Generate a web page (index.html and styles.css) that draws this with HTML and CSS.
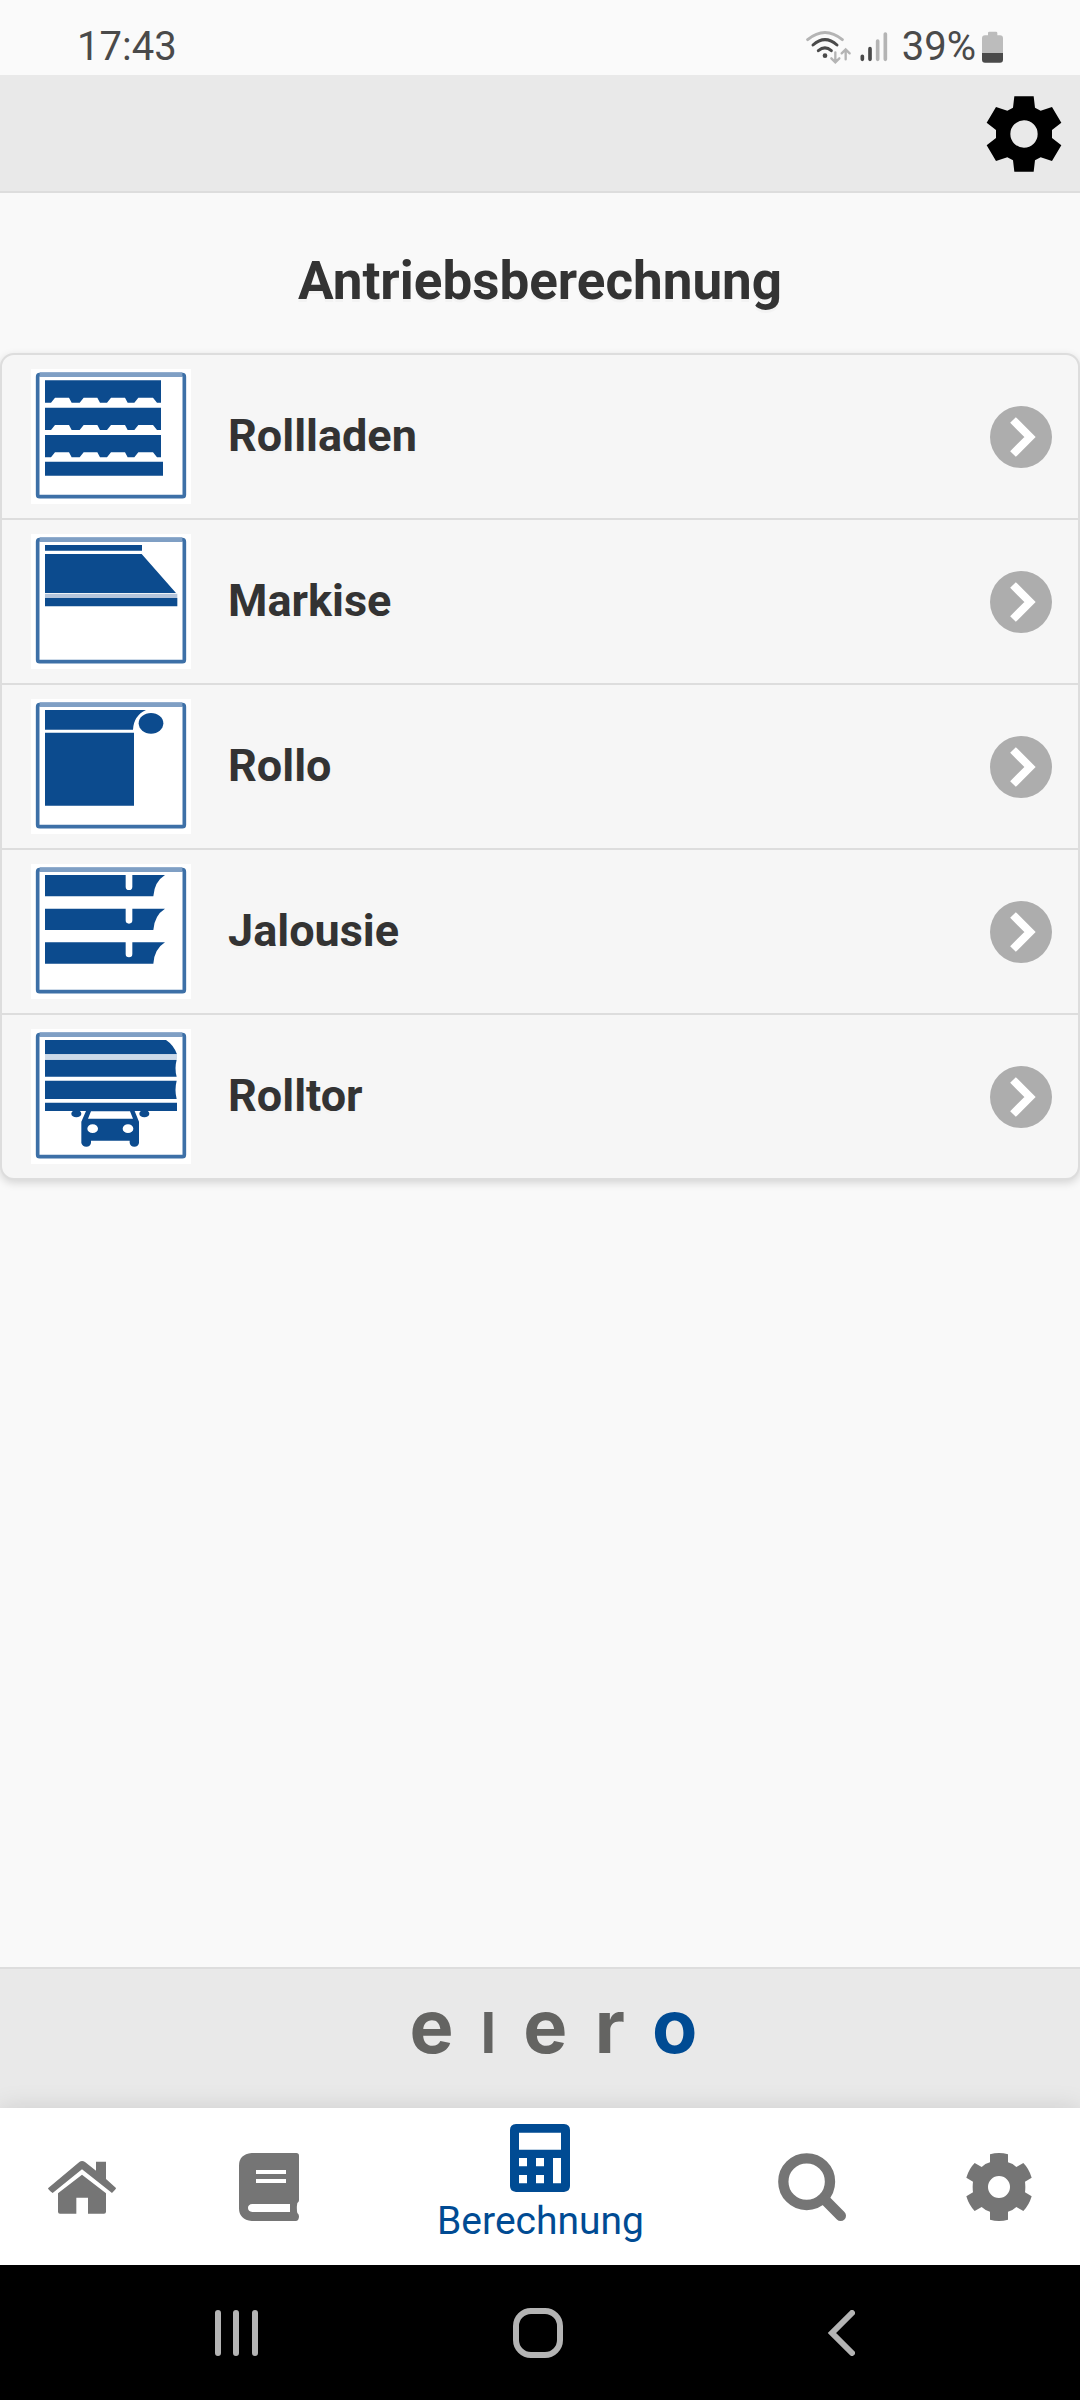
FILE: index.html
```html
<!DOCTYPE html>
<html lang="de">
<head>
<meta charset="utf-8">
<meta name="viewport" content="width=device-width, initial-scale=1">
<title>Antriebsberechnung</title>
<link rel="stylesheet" href="styles.css">
</head>
<body>
<svg class="defs" aria-hidden="true">
  <symbol id="frame" viewBox="0 0 480 405">
    <rect width="480" height="405" fill="#fff"/>
    <rect x="20" y="17" width="440" height="366" rx="6" fill="none" stroke="#3d70a7" stroke-width="11"/>
    <path d="M26 17H454" stroke="#7f9fc4" stroke-width="14"/>
  </symbol>
  <symbol id="chevron" viewBox="0 0 62 62">
    <circle cx="31" cy="31" r="31" fill="#adadad"/>
    <path d="M23 14L40 31L23 48" fill="none" stroke="#fff" stroke-width="8"/>
  </symbol>
</svg>

<div class="status">
  <time class="status-time">17:43</time>
  <div class="status-icons">
    <svg width="46" height="34" viewBox="0 0 138 102" fill="none" stroke-linecap="round" aria-label="WLAN">
      <path d="M5 29Q57-14 109 29" stroke="#b4b4b4" stroke-width="9"/>
      <path d="M21 45Q57 13 93 45M37 62Q57 45 76 62" stroke="#4a4a4a" stroke-width="9"/>
      <circle cx="57" cy="77" r="7" fill="#4a4a4a"/>
      <path d="M88 67V96M76 85L88 97L100 85M119 88V58M107 70L119 58L131 70" stroke="#b4b4b4" stroke-width="7"/>
    </svg>
    <svg class="signal" width="28" height="30" viewBox="0 0 84 90" stroke-width="11" stroke-linecap="round" aria-label="Signal">
      <path d="M7 73V82M30 50V82" stroke="#4a4a4a"/>
      <path d="M53 27V82M76 6V82" stroke="#b4b4b4"/>
    </svg>
    <span class="status-charge">39%</span>
    <svg width="21" height="32" viewBox="0 0 63 96" aria-label="Akku">
      <path d="M18 13V6Q18 2 22 2H42Q46 2 46 6V13H54Q63 13 63 22V66H0V22Q0 13 9 13Z" fill="#bcbcbc"/>
      <path d="M0 66H63V86Q63 95 54 95H9Q0 95 0 86Z" fill="#4a4a4a"/>
    </svg>
  </div>
</div>

<header class="header">
  <button class="icon-button" type="button" aria-label="Einstellungen">
    <svg width="76" height="76" viewBox="-114 -114 228 228">
      <path fill-rule="evenodd" d="M-29-113H29L33-79L50-70L84-81L112-34L84-12V12L112 34L84 81L50 70L33 79L29 113H-29L-33 79L-50 70L-84 81L-112 34L-84 12V-12L-112-34L-84-81L-50-70L-33-79ZM0-41A41 41 0 0 0 0 41A41 41 0 0 0 0-41Z"/>
    </svg>
  </button>
</header>

<main class="content">
  <h1 class="title">Antriebsberechnung</h1>
  <ul class="list">
    <li><a class="row" href="#rollladen">
      <svg class="thumb" viewBox="0 0 480 405" fill="#0c4b8e" aria-hidden="true">
        <use href="#frame"/>
        <path id="slat" d="M42 34H390V101H378L366 86H322L310 101H290L282 86H240L228 101H207L199 86H158L146 101H122L114 86H72L60 101H42Z"/>
        <use href="#slat" y="82"/>
        <use href="#slat" y="164"/>
        <path d="M42 278H396V320H42Z"/>
      </svg>
      <span class="row-label">Rollladen</span>
      <svg class="chevron" aria-hidden="true"><use href="#chevron"/></svg>
    </a></li>
    <li><a class="row" href="#markise">
      <svg class="thumb" viewBox="0 0 480 405" fill="#0c4b8e" aria-hidden="true">
        <use href="#frame"/>
        <path d="M42 33H333V50H42ZM42 60H332L435 177H42ZM42 192H439V217H42Z"/>
        <path d="M42 179H439V192H42Z" fill="#b4c5dc"/>
      </svg>
      <span class="row-label">Markise</span>
      <svg class="chevron" aria-hidden="true"><use href="#chevron"/></svg>
    </a></li>
    <li><a class="row" href="#rollo">
      <svg class="thumb" viewBox="0 0 480 405" fill="#0c4b8e" aria-hidden="true">
        <use href="#frame"/>
        <path d="M42 33H345Q308 50 306 92H42ZM42 101H309V320H42Z"/>
        <ellipse cx="360" cy="73" rx="37" ry="31"/>
      </svg>
      <span class="row-label">Rollo</span>
      <svg class="chevron" aria-hidden="true"><use href="#chevron"/></svg>
    </a></li>
    <li><a class="row" href="#jalousie">
      <svg class="thumb" viewBox="0 0 480 405" fill="#0c4b8e" aria-hidden="true">
        <use href="#frame"/>
        <path id="blade" d="M42 33H284V68a10 10 0 0 0 20 0V33H402Q370 53 367 97H42Z"/>
        <use href="#blade" y="101"/>
        <use href="#blade" y="202"/>
      </svg>
      <span class="row-label">Jalousie</span>
      <svg class="chevron" aria-hidden="true"><use href="#chevron"/></svg>
    </a></li>
    <li><a class="row" href="#rolltor">
      <svg class="thumb" viewBox="0 0 480 405" fill="#0c4b8e" aria-hidden="true">
        <use href="#frame"/>
        <path d="M42 33H405Q428 48 438 76H42ZM42 92H437Q430 118 437 143H42ZM42 155H437Q430 182 437 210H42ZM42 221H438V246H42Z"/>
        <path d="M42 77H438V91H42Z" fill="#ccdaea"/>
        <ellipse cx="136" cy="254" rx="15" ry="11"/>
        <ellipse cx="340" cy="254" rx="15" ry="11"/>
        <path fill-rule="evenodd" d="M166 244H310L324 278V342Q322 353 310 353T296 342V335H180V342Q178 353 166 353T151 342V278ZM180 247L171 269H306L297 247ZM185 286A16 13 0 0 0 185 312A16 13 0 0 0 185 286ZM291 286A16 13 0 0 0 291 312A16 13 0 0 0 291 286Z"/>
      </svg>
      <span class="row-label">Rolltor</span>
      <svg class="chevron" aria-hidden="true"><use href="#chevron"/></svg>
    </a></li>
  </ul>
</main>

<footer class="brand">
  <div class="logo"><span>e</span><span class="logo-short">l</span><span>e</span><span>r</span><span class="logo-accent">o</span></div>
</footer>

<nav class="tabs" aria-label="Hauptmenü">
  <a class="tab tab-edge" href="#home" aria-label="Start">
    <svg width="68" height="68" viewBox="0 0 204 204" fill="currentColor">
      <path d="M0 106L94 27Q102 21 111 27L144 53V26H174V78L204 105Q205 108 192 120L102 49L14 120Q0 110 0 106Z"/>
      <path d="M102 65L174 121V176Q174 182 168 182H120V134H85V182H36Q30 182 30 176V121Z"/>
    </svg>
  </a>
  <a class="tab tab-inner" href="#katalog" aria-label="Katalog">
    <svg width="60" height="68" viewBox="0 0 180 204" fill="currentColor">
      <path fill-rule="evenodd" d="M38 0H172Q180 0 180 8V142Q180 147 175 150Q172 165 175 180Q180 184 180 190Q180 204 170 204H38Q0 200 0 166V38Q0 4 38 0ZM51 51V63H141V51ZM51 78V90H141V78ZM40 153Q27 154 27 165T40 177H153V153Z"/>
    </svg>
  </a>
  <a class="tab tab-active" href="#berechnung" aria-current="page">
    <svg width="60" height="68" viewBox="0 0 180 204" fill="currentColor">
      <path fill-rule="evenodd" d="M18 0H162Q180 2 180 18V186Q180 202 162 204H18Q0 202 0 186V18Q0 2 18 0ZM27 26V77H153V26ZM27 102V127H51V102ZM78 102V127H102V102ZM129 102V178H153V102ZM27 153V178H51V153ZM78 153V178H102V153Z"/>
    </svg>
    <span class="tab-label">Berechnung</span>
  </a>
  <a class="tab tab-inner" href="#suche" aria-label="Suche">
    <svg width="68" height="68" viewBox="0 0 204 204" fill="none" stroke="currentColor">
      <circle cx="86" cy="86" r="70" stroke-width="31"/>
      <path d="M142 142L188 188" stroke-width="32" stroke-linecap="round"/>
    </svg>
  </a>
  <a class="tab tab-edge" href="#einstellungen" aria-label="Einstellungen">
    <svg width="68" height="68" viewBox="-102 -102 204 204" fill="currentColor">
      <path fill-rule="evenodd" d="M-27-98Q0-106 27-98V-74Q42-70 52-60L73-72Q90-55 98-28L78-16Q80 0 78 16L98 28Q90 55 73 72L52 60Q42 70 27 74V98Q0 106-27 98V74Q-42 70-52 60L-73 72Q-90 55-98 28L-78 16Q-80 0-78-16L-98-28Q-90-55-73-72L-52-60Q-42-70-27-74ZM0-33A33 33 0 0 0 0 33A33 33 0 0 0 0-33Z"/>
    </svg>
  </a>
</nav>

<div class="system">
  <button class="system-button" type="button" aria-label="Letzte Apps">
    <svg width="46" height="52" viewBox="0 0 46 52" stroke="#b4b4b4" stroke-width="6" stroke-linecap="round">
      <path d="M5 6V46M23 6V46M42 6V46"/>
    </svg>
  </button>
  <button class="system-button" type="button" aria-label="Startbildschirm">
    <svg width="50" height="50" viewBox="0 0 50 50" fill="none" stroke="#b4b4b4" stroke-width="6">
      <rect x="3" y="3" width="44" height="44" rx="15"/>
    </svg>
  </button>
  <button class="system-button" type="button" aria-label="Zurück">
    <svg width="28" height="46" viewBox="0 0 28 46" fill="none" stroke="#b4b4b4" stroke-width="6" stroke-linecap="round">
      <path d="M25 3L5 23L25 43"/>
    </svg>
  </button>
</div>
</body>
</html>
```
FILE: styles.css
```css
* {
  box-sizing: border-box;
}

body {
  margin: 0;
  min-height: 100vh;
  display: flex;
  flex-direction: column;
  background: #f9f9f9;
  color: #333;
  font-family: Roboto, "Liberation Sans", sans-serif;
}

svg {
  display: block;
  flex: none;
}

button {
  padding: 0;
  border: 0;
  background: none;
  color: inherit;
}

a {
  color: inherit;
  text-decoration: none;
}

.defs {
  position: absolute;
  width: 0;
  height: 0;
}

/* Status bar */
.status {
  display: flex;
  align-items: center;
  justify-content: space-between;
  height: 75px;
  padding: 18px 77px 0;
  background: #fafafa;
  color: #4a4a4a;
  font-size: 40px;
  line-height: 48px;
}

.status-icons {
  display: flex;
  align-items: center;
}

.signal {
  margin: 0 14px 0 8px;
}

.status-charge {
  margin-right: 6px;
}

/* Top bar */
.header {
  display: flex;
  align-items: center;
  justify-content: flex-end;
  height: 118px;
  padding: 2px 18px 0;
  border-bottom: 2px solid #ddd;
  background: #e9e9e9;
}

.icon-button {
  color: #000;
}

/* Page */
.content {
  flex: 1;
}

.title {
  margin: 56px 0 40px;
  font-size: 53px;
  font-weight: 700;
  line-height: 64px;
  text-align: center;
  text-shadow: 0 3px 0 #f3f3f3;
}

.list {
  margin: 0;
  padding: 0;
  list-style: none;
  border: 2px solid #ddd;
  border-radius: 14px;
  background: #f6f6f6;
  box-shadow: 0 3px 9px rgba(0, 0, 0, 0.15);
}

.list li + li {
  border-top: 2px solid #ddd;
}

.row {
  display: flex;
  align-items: center;
  height: 163px;
  padding: 0 26px 0 29px;
}

.thumb {
  width: 160px;
  height: 135px;
}

.row-label {
  flex: 1;
  padding: 0 0 2px 37px;
  font-size: 45px;
  font-weight: 700;
  line-height: 56px;
  text-shadow: 0 3px 0 #f3f3f3;
}

.chevron {
  width: 62px;
  height: 62px;
}

/* Brand bar */
.brand {
  display: flex;
  justify-content: center;
  height: 141px;
  padding: 0 0 0 27px;
  border-top: 2px solid #ddd;
  background: #e9e9e9;
}

.logo {
  display: flex;
  align-items: baseline;
  justify-content: space-between;
  width: 288px;
  color: #646462;
  font-family: Inter, sans-serif;
  font-size: 74px;
  font-weight: 700;
  line-height: 114px;
}

.logo-short {
  font-size: 56px;
}

.logo-accent {
  color: #004b93;
}

/* Tab bar */
.tabs {
  display: flex;
  height: 157px;
  padding-left: 1px;
  background: #fff;
  color: #757575;
  box-shadow: 0 0 24px rgba(0, 0, 0, 0.12);
}

.tab {
  display: flex;
  flex-direction: column;
  align-items: center;
  justify-content: center;
  flex: 107 1 0;
}

.tab-edge {
  flex-grow: 81;
}

.tab-active {
  flex-grow: 165;
  padding-bottom: 4px;
  color: #004b93;
}

.tab-label {
  margin-top: 5px;
  font-size: 39px;
  line-height: 48px;
}

/* System navigation */
.system {
  position: relative;
  display: flex;
  height: 135px;
  padding: 0 88px 0 85px;
  background: #000;
}

.system-button {
  display: flex;
  align-items: center;
  justify-content: center;
  flex: 1;
}
```
